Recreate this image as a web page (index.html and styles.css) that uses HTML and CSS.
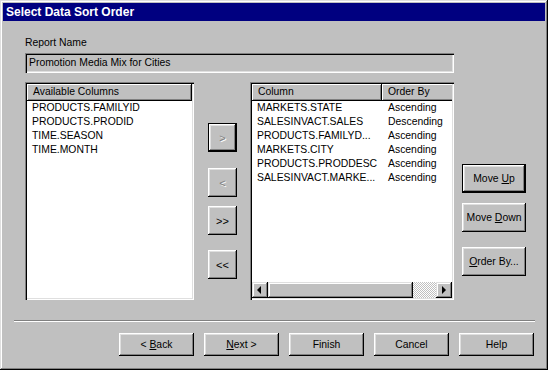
FILE: index.html
```html
<!DOCTYPE html>
<html>
<head>
<meta charset="utf-8">
<link rel="stylesheet" href="styles.css">
</head>
<body>
<div class="window">
  <div class="titlebar">Select Data Sort Order</div>
  <div class="body">
    <div class="label">Report Name</div>
    <div class="field">Promotion Media Mix for Cities</div>
    <div class="main">
      <div class="list list-left">
        <div class="clip">
          <div class="hdr"><div class="cell cell-full">Available Columns</div></div>
          <div class="rows">
            <div class="row">PRODUCTS.FAMILYID</div>
            <div class="row">PRODUCTS.PRODID</div>
            <div class="row">TIME.SEASON</div>
            <div class="row">TIME.MONTH</div>
          </div>
        </div>
      </div>
      <div class="mover">
        <div class="btn btn-default btn-disabled mv1"><span>&gt;</span></div>
        <div class="btn btn-disabled mv2"><span>&lt;</span></div>
        <div class="btn mv3"><span>&gt;&gt;</span></div>
        <div class="btn mv4"><span>&lt;&lt;</span></div>
      </div>
      <div class="list list-right">
        <div class="clip">
          <div class="hdr">
            <div class="cell cell-col">Column</div>
            <div class="cell cell-ord">Order By</div>
          </div>
          <div class="rows">
            <div class="row grid"><span>MARKETS.STATE</span><span class="ord">Ascending</span></div>
            <div class="row grid"><span>SALESINVACT.SALES</span><span class="ord">Descending</span></div>
            <div class="row grid"><span>PRODUCTS.FAMILYD...</span><span class="ord">Ascending</span></div>
            <div class="row grid"><span>MARKETS.CITY</span><span class="ord">Ascending</span></div>
            <div class="row grid"><span>PRODUCTS.PRODDESC</span><span class="ord">Ascending</span></div>
            <div class="row grid"><span>SALESINVACT.MARKE...</span><span class="ord">Ascending</span></div>
          </div>
          <div class="hscroll">
            <div class="arrow"><svg width="16" height="16" viewBox="0 0 16 16"><polygon points="5,8 9,4 9,12" fill="#000"/></svg></div>
            <div class="thumb"></div>
            <div class="track"></div>
            <div class="arrow"><svg width="16" height="16" viewBox="0 0 16 16"><polygon points="6,4 10,8 6,12" fill="#000"/></svg></div>
          </div>
        </div>
      </div>
      <div class="side">
        <div class="btn btn-default sd1"><span>Move <u>U</u>p</span></div>
        <div class="btn sd2"><span>Move <u>D</u>own</span></div>
        <div class="btn sd3"><span><u>O</u>rder By...</span></div>
      </div>
    </div>
    <div class="sep"></div>
    <div class="footer">
      <div class="btn fbtn"><span>&lt; <u>B</u>ack</span></div>
      <div class="btn fbtn"><span><u>N</u>ext &gt;</span></div>
      <div class="btn fbtn"><span>Finish</span></div>
      <div class="btn fbtn"><span>Cancel</span></div>
      <div class="btn fbtn"><span>Help</span></div>
    </div>
  </div>
</div>
</body>
</html>
```
FILE: styles.css
```css
html, body {
  margin: 0;
  padding: 0;
}
body {
  background: #c0c0c0;
  font-family: "Liberation Sans", Arial, sans-serif;
  font-size: 10.4px;
  color: #000;
}
.window {
  width: 548px;
  height: 370px;
  box-sizing: border-box;
  padding: 3px;
  background: #c0c0c0;
  box-shadow: inset -1px -1px #000, inset 1px 1px #dfdfdf, inset -2px -2px #808080, inset 2px 2px #fff;
  display: flex;
  flex-direction: column;
}
.titlebar {
  height: 18px;
  line-height: 18px;
  background: #000080;
  color: #fff;
  font-weight: bold;
  font-size: 12px;
  padding-left: 3px;
}
.body {
  padding-left: 11px;
}
.label {
  margin: 15px 0 0 11px;
  height: 14px;
  line-height: 14px;
}
.field {
  margin: 3px 0 0 11px;
  width: 429px;
  height: 20px;
  box-sizing: border-box;
  padding: 0 4px;
  line-height: 20px;
  background: #c0c0c0;
  box-shadow: inset 1px 1px #808080, inset 2px 2px #000, inset -1px -1px #fff, inset -2px -2px #dfdfdf;
}
.main {
  display: flex;
  margin: 9px 0 0 11px;
  height: 218px;
}
.list {
  box-sizing: border-box;
  padding: 2px;
  background: #fff;
  box-shadow: inset 1px 1px #808080, inset 2px 2px #000, inset -1px -1px #fff, inset -2px -2px #dfdfdf;
  height: 218px;
}
.clip {
  width: 100%;
  height: 100%;
  overflow: hidden;
  display: flex;
  flex-direction: column;
}
.list-left {
  width: 169px;
}
.list-right {
  width: 204px;
  margin-left: 13px;
}
.hdr {
  display: flex;
  height: 17px;
  flex: none;
}
.cell {
  box-sizing: border-box;
  height: 17px;
  line-height: 16px;
  padding-left: 6px;
  background: #c0c0c0;
  white-space: nowrap;
  box-shadow: inset -1px -1px #000, inset 1px 1px #fff, inset -2px -2px #808080;
}
.cell-full {
  width: 100%;
}
.cell-col {
  width: 130px;
  flex: none;
}
.cell-ord {
  width: 100px;
  flex: none;
  padding-left: 6px;
}
.rows {
  flex: 1;
}
.row {
  height: 14px;
  line-height: 14px;
  padding-left: 5px;
  white-space: nowrap;
}
.grid {
  display: grid;
  grid-template-columns: 130px auto;
}
.ord {
  padding-left: 1px;
}
.hscroll {
  display: flex;
  height: 16px;
  flex: none;
}
.arrow {
  width: 16px;
  height: 16px;
  flex: none;
  background: #c0c0c0;
  box-shadow: inset -1px -1px #000, inset 1px 1px #dfdfdf, inset -2px -2px #808080, inset 2px 2px #fff;
}
.arrow svg {
  display: block;
}
.thumb {
  width: 145px;
  flex: none;
  background: #c0c0c0;
  box-shadow: inset -1px -1px #000, inset 1px 1px #dfdfdf, inset -2px -2px #808080, inset 2px 2px #fff;
}
.track {
  flex: 1;
  background: repeating-conic-gradient(#c0c0c0 0 25%, #fff 0 50%) 0 0 / 2px 2px;
}
.btn {
  box-sizing: border-box;
  background: #c0c0c0;
  display: flex;
  align-items: center;
  justify-content: center;
  white-space: nowrap;
  box-shadow: inset -1px -1px #000, inset 1px 1px #fff, inset -2px -2px #808080, inset 2px 2px #dfdfdf;
}
.btn-default {
  border: 1px solid #000;
}
.btn-disabled {
  color: #808080;
  text-shadow: 1px 1px #fff;
}
.mover {
  width: 29px;
  margin-left: 14px;
  display: flex;
  flex-direction: column;
}
.mover .btn {
  height: 29px;
  font-size: 11px;
}
.mv1 { margin-top: 41px; }
.mv2 { margin-top: 16px; }
.mv3 { margin-top: 9px; }
.mv4 { margin-top: 15px; }
.side {
  width: 64px;
  margin-left: 8px;
  display: flex;
  flex-direction: column;
}
.side .btn {
  height: 29px;
}
.sd1 { margin-top: 82px; }
.sd2 { margin-top: 10px; }
.sd3 { margin-top: 15px; }
.sep {
  margin-top: 20px;
  width: 521px;
  height: 0;
  border-top: 1px solid #808080;
  border-bottom: 1px solid #fff;
}
.footer {
  display: flex;
  gap: 10px;
  margin: 11px 0 0 105px;
}
.fbtn {
  width: 75px;
  height: 23px;
}
```
